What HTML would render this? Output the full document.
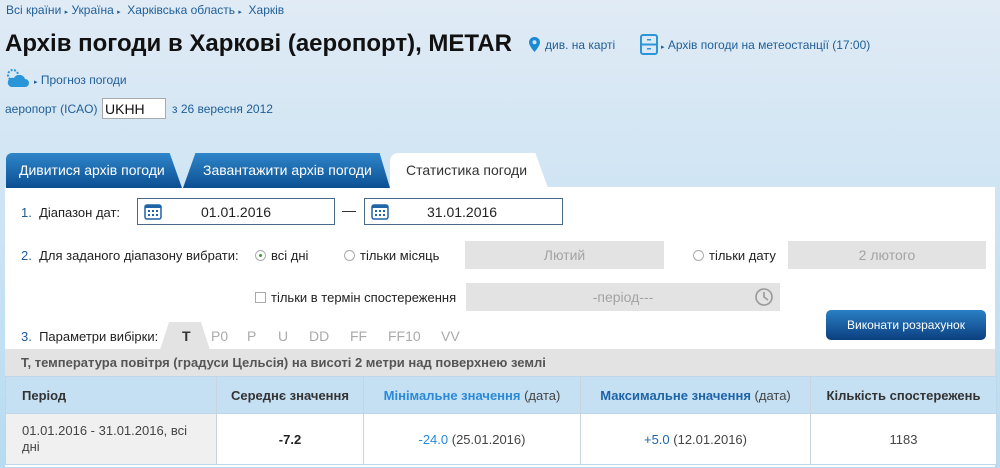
<!DOCTYPE html>
<html><head><meta charset="utf-8"><style>
*{margin:0;padding:0;box-sizing:border-box}
body{width:1000px;height:468px;overflow:hidden;position:relative;font-family:"Liberation Sans",Arial,sans-serif;font-size:12px;color:#222;background:linear-gradient(#e0ebf5,#b7dbf2)}
.a{position:absolute;white-space:nowrap}
.lnk{color:#1f5e96}
.tab{position:absolute;top:153px;height:35px;color:#fff;font-size:14px;line-height:35px;padding-left:13px;background:linear-gradient(#2f86c9,#0c4f93);border-radius:6px 6px 0 0}
.inp{position:absolute;border:1px solid #4a6a8a;background:#fff;height:27px}
.grey{position:absolute;background:#e3e3e3;color:#a3a3a3;font-size:14px;text-align:center;line-height:28px;height:28px}
.rad{display:inline-block;width:11px;height:11px;border:1px solid #aaa;border-radius:50%;vertical-align:-1px;margin-right:5px;background:#fff;position:relative}
td{border-right:1px solid #c9d4de;text-align:center;font-size:12px}
</style></head><body>
<div class="a lnk" style="left:6px;top:3px;font-size:12px">Всі країни <span style="font-size:7px">▸</span> Україна <span style="font-size:7px">▸</span>&nbsp; Харківська область <span style="font-size:7px">▸</span>&nbsp; Харків</div>
<div class="a" style="left:5px;top:30px;font-size:24px;font-weight:bold;color:#111">Архів погоди в Харкові (аеропорт), METAR</div>
<svg class="a" style="left:529px;top:37px" width="11" height="15" viewBox="0 0 11 15"><path d="M5.5 0C2.5 0 0 2.3 0 5.3 0 9 5.5 15 5.5 15S11 9 11 5.3C11 2.3 8.5 0 5.5 0z" fill="#1a8ad4"/><circle cx="5.5" cy="5.3" r="2" fill="#cfe4f4"/></svg>
<div class="a lnk" style="left:545px;top:38px">див. на карті</div>
<svg class="a" style="left:640px;top:34px" width="18" height="21" viewBox="0 0 18 21"><rect x="1" y="1" width="16" height="19" rx="2" fill="none" stroke="#2a95d8" stroke-width="2"/><line x1="1" y1="10.5" x2="17" y2="10.5" stroke="#2a95d8" stroke-width="2"/><rect x="7" y="5" width="4" height="1.5" fill="#2a95d8"/><rect x="7" y="14" width="4" height="1.5" fill="#2a95d8"/></svg>
<div class="a lnk" style="left:661px;top:38px"><span style="font-size:7px">▸</span> Архів погоди на метеостанції (17:00)</div>
<svg class="a" style="left:5px;top:67px" width="24" height="22" viewBox="0 0 24 22"><circle cx="8" cy="8" r="5" fill="none" stroke="#2a95d8" stroke-width="2" stroke-dasharray="2 1.5"/><path d="M6 20h14a4 4 0 0 0 0-8 6 6 0 0 0-11-1 4.5 4.5 0 0 0-3 9z" fill="#2a95d8"/></svg>
<div class="a lnk" style="left:34px;top:73px"><span style="font-size:7px">▸</span> Прогноз погоди</div>
<div class="a lnk" style="left:5px;top:102px">аеропорт (ICAO)</div>
<div class="a" style="left:102px;top:98px;width:64px;height:21px;border:1px solid #aaa;background:#fff;font-size:14px;padding:2px 0 0 2px;color:#111">UKHH</div>
<div class="a lnk" style="left:172px;top:102px">з 26 вересня 2012</div>

<div class="a" style="left:5px;top:187px;width:990px;height:280px;background:#fff"></div>
<div class="tab" style="left:6px;width:176px;clip-path:polygon(0 0,93% 0,100% 100%,0 100%)">Дивитися архів погоди</div>
<div class="tab" style="left:183px;width:207px;clip-path:polygon(6% 0,95% 0,100% 100%,0 100%);padding-left:20px">Завантажити архів погоди</div>
<div class="a" style="left:390px;top:153px;width:158px;height:35px;background:#fff;border-radius:8px 8px 0 0;clip-path:polygon(0 0,92% 0,100% 100%,0 100%);font-size:14px;line-height:35px;padding-left:16px;color:#333">Статистика погоди</div>

<div class="a" style="left:21px;top:205px;font-size:13px"><b style="color:#1d5a96;font-weight:normal">1.</b>&nbsp; Діапазон дат:</div>
<div class="inp" style="left:137px;top:198px;width:198px"><svg class="a" style="left:6px;top:3px" width="18" height="18" viewBox="0 0 18 18"><rect x="1" y="3" width="16" height="14" rx="2" fill="#fff" stroke="#1e64a8" stroke-width="1.5"/><rect x="1" y="3" width="16" height="3" fill="#1e64a8"/><g fill="#1e64a8"><rect x="4" y="8" width="2" height="2"/><rect x="8" y="8" width="2" height="2"/><rect x="12" y="8" width="2" height="2"/><rect x="4" y="12" width="2" height="2"/><rect x="8" y="12" width="2" height="2"/><rect x="12" y="12" width="2" height="2"/></g></svg><span class="a" style="left:63px;top:5px;font-size:14px">01.01.2016</span></div>
<div class="a" style="left:342px;top:202px;font-size:14px">—</div>
<div class="inp" style="left:364px;top:198px;width:199px"><svg class="a" style="left:6px;top:3px" width="18" height="18" viewBox="0 0 18 18"><rect x="1" y="3" width="16" height="14" rx="2" fill="#fff" stroke="#1e64a8" stroke-width="1.5"/><rect x="1" y="3" width="16" height="3" fill="#1e64a8"/><g fill="#1e64a8"><rect x="4" y="8" width="2" height="2"/><rect x="8" y="8" width="2" height="2"/><rect x="12" y="8" width="2" height="2"/><rect x="4" y="12" width="2" height="2"/><rect x="8" y="12" width="2" height="2"/><rect x="12" y="12" width="2" height="2"/></g></svg><span class="a" style="left:62px;top:5px;font-size:14px">31.01.2016</span></div>

<div class="a" style="left:21px;top:248px;font-size:13px"><span style="color:#1d5a96">2.</span>&nbsp; Для заданого діапазону вибрати:</div>
<div class="a" style="left:255px;top:248px;font-size:13px"><span class="rad"><span style="position:absolute;left:3px;top:3px;width:3px;height:3px;border-radius:50%;background:#3a9a3a"></span></span>всі дні</div>
<div class="a" style="left:344px;top:248px;font-size:13px"><span class="rad"></span>тільки місяць</div>
<div class="grey" style="left:465px;top:241px;width:199px">Лютий</div>
<div class="a" style="left:693px;top:248px;font-size:13px"><span class="rad"></span>тільки дату</div>
<div class="grey" style="left:788px;top:241px;width:198px">2 лютого</div>
<div class="a" style="left:255px;top:290px;font-size:13px"><span style="display:inline-block;width:11px;height:11px;border:1px solid #aaa;vertical-align:-1px;margin-right:5px"></span>тільки в термін спостереження</div>
<div class="grey" style="left:466px;top:283px;width:314px">-період---</div>
<svg class="a" style="left:754px;top:287px" width="20" height="20" viewBox="0 0 20 20"><circle cx="10" cy="10" r="8" fill="none" stroke="#999" stroke-width="1.6"/><path d="M10 5v5l4 3" fill="none" stroke="#999" stroke-width="1.6"/></svg>
<div class="a" style="left:826px;top:310px;width:160px;height:30px;border-radius:5px;background:linear-gradient(#2a7fc4,#0b3f80);color:#fff;font-size:12px;text-align:center;line-height:30px">Виконати розрахунок</div>

<div class="a" style="left:21px;top:329px;font-size:13px"><span style="color:#1d5a96">3.</span>&nbsp; Параметри вибірки:</div>
<div class="a" style="left:160px;top:322px;width:50px;height:28px;background:#e3e3e3;border-radius:8px 8px 0 0;clip-path:polygon(18% 0,82% 0,100% 100%,0 100%)"></div>
<div class="a" style="left:182px;top:328px;font-size:14px;font-weight:bold;color:#333">T</div>
<div class="a" style="left:211px;top:328px;font-size:14px;color:#aaa">P0</div>
<div class="a" style="left:247px;top:328px;font-size:14px;color:#aaa">P</div>
<div class="a" style="left:278px;top:328px;font-size:14px;color:#aaa">U</div>
<div class="a" style="left:309px;top:328px;font-size:14px;color:#aaa">DD</div>
<div class="a" style="left:350px;top:328px;font-size:14px;color:#aaa">FF</div>
<div class="a" style="left:388px;top:328px;font-size:14px;color:#aaa">FF10</div>
<div class="a" style="left:441px;top:328px;font-size:14px;color:#aaa">VV</div>
<div class="a" style="left:5px;top:349px;width:990px;height:27px;background:#e3e3e3"></div>
<div class="a" style="left:21px;top:355px;font-size:13px;font-weight:bold;color:#555">T, температура повітря (градуси Цельсія) на висоті 2 метри над поверхнею землі</div>

<table class="a" style="left:5px;top:376px;width:992px;border-collapse:collapse;border:1px solid #c0d7ea;table-layout:fixed">
<tr style="height:37px;background:#c5dff3;font-weight:bold;color:#333">
<td style="width:211px;text-align:left;padding-left:16px;font-size:13px">Період</td>
<td style="width:147px;font-size:13px">Середнє значення</td>
<td style="width:217px;font-size:13px"><span style="color:#2a8ad8">Мінімальне значення</span> <span style="font-weight:normal;color:#444">(дата)</span></td>
<td style="width:230px;font-size:13px"><span style="color:#1e64a8">Максимальне значення</span> <span style="font-weight:normal;color:#444">(дата)</span></td>
<td style="font-size:13px;border-right:none">Кількість спостережень</td></tr>
<tr style="height:51px;background:#fff;border-top:1px solid #c0d7ea">
<td style="background:#f0f0f0;text-align:left;padding-left:16px;padding-right:20px;font-size:13px;color:#444;line-height:16px;white-space:normal">01.01.2016 - 31.01.2016, всі дні</td>
<td style="font-weight:bold;font-size:13px">-7.2</td>
<td style="font-size:13px;color:#444"><span style="color:#2a8ad8">-24.0</span> (25.01.2016)</td>
<td style="font-size:13px;color:#444"><span style="color:#1e64a8">+5.0</span> (12.01.2016)</td>
<td style="font-size:13px;color:#444;border-right:none">1183</td></tr>
</table>
</body></html>
